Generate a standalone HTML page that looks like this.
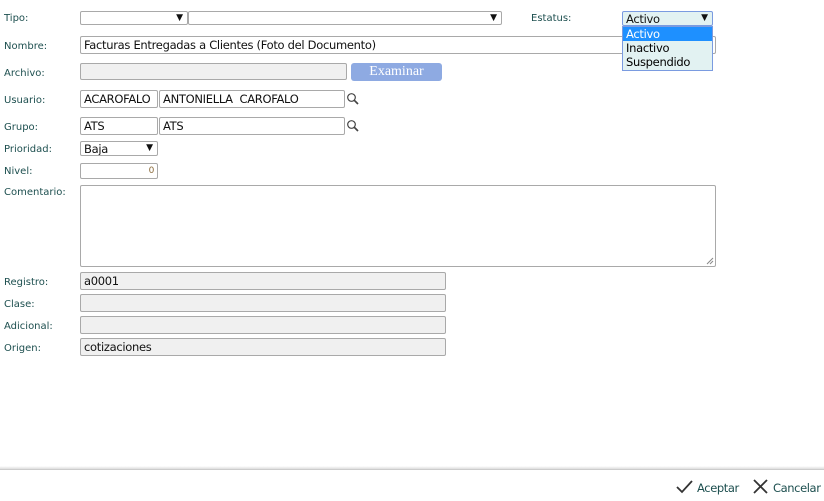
<!DOCTYPE html>
<html><head><meta charset="utf-8"><style>
*{box-sizing:border-box;margin:0;padding:0}
body{width:824px;height:501px;background:#fff;position:relative;overflow:hidden;font-family:"DejaVu Sans","Liberation Sans",sans-serif;}
.l{position:absolute;left:4px;font-size:10px;color:#1d4f4f;}
.i{position:absolute;border:1px solid #a9a9a9;border-radius:2px;background:#fff;font-size:11.5px;letter-spacing:-0.3px;color:#111;padding-left:3px;line-height:17px;white-space:nowrap;overflow:hidden}
.g{background:#f0f0f0}
.arr{position:absolute;right:4px;top:0;font-size:9px;letter-spacing:0}
svg{position:absolute}
</style></head><body>
<div class="l" style="top:13px">Tipo:</div>
<div class="i" style="left:80px;top:11px;width:108px;height:14px"><span class="arr" style="line-height:13px">▼</span></div>
<div class="i" style="left:188px;top:11px;width:314px;height:14px"><span class="arr" style="line-height:13px">▼</span></div>
<div class="l" style="left:531px;top:13px">Estatus:</div>
<div class="i" style="left:622px;top:11px;width:91px;height:15px;background:#e2f2f2;border-color:#7a9be0;line-height:14px">Activo<span class="arr" style="line-height:13px">▼</span></div>
<div style="position:absolute;left:622px;top:26px;width:91px;height:45px;border:1px solid #7a9be0;background:#e2f2f2;font-size:11.5px;letter-spacing:-0.3px;line-height:14px;z-index:2">
<div style="background:#1e90ff;color:#fff;padding-left:3px">Activo</div>
<div style="padding-left:3px">Inactivo</div>
<div style="padding-left:3px">Suspendido</div></div>

<div class="l" style="top:41px">Nombre:</div>
<div class="i" style="left:80px;top:36px;width:636px;height:18px">Facturas Entregadas a Clientes (Foto del Documento)</div>
<div class="l" style="top:68px">Archivo:</div>
<div class="i g" style="left:80px;top:63px;width:267px;height:17px"></div>
<div style="position:absolute;left:351px;top:63px;width:91px;height:18px;background:#8eaae2;border-radius:3px;color:#fff;font-family:'Liberation Serif',serif;font-size:14px;text-align:center;line-height:17px">Examinar</div>

<div class="l" style="top:95px">Usuario:</div>
<div class="i" style="left:80px;top:90px;width:78px;height:18px">ACAROFALO</div>
<div class="i" style="left:159px;top:90px;width:186px;height:18px">ANTONIELLA&nbsp; CAROFALO</div>
<svg style="left:346px;top:92px" width="14" height="14" viewBox="0 0 14 14"><circle cx="5.5" cy="5.5" r="3.8" fill="none" stroke="#444" stroke-width="1.2"/><path d="M8.3 8.3L12 12" stroke="#444" stroke-width="1.7"/></svg>
<div class="l" style="top:122px">Grupo:</div>
<div class="i" style="left:80px;top:117px;width:78px;height:18px">ATS</div>
<div class="i" style="left:159px;top:117px;width:186px;height:18px">ATS</div>
<svg style="left:346px;top:119px" width="14" height="14" viewBox="0 0 14 14"><circle cx="5.5" cy="5.5" r="3.8" fill="none" stroke="#444" stroke-width="1.2"/><path d="M8.3 8.3L12 12" stroke="#444" stroke-width="1.7"/></svg>

<div class="l" style="top:144px">Prioridad:</div>
<div class="i" style="left:80px;top:141px;width:78px;height:15px;line-height:14px">Baja<span class="arr" style="line-height:13px">▼</span></div>
<div class="l" style="top:166px">Nivel:</div>
<div class="i" style="left:80px;top:163px;width:78px;height:16px;font-size:9px;text-align:right;padding-right:3px;line-height:14px;color:#8a6a3a">0</div>
<div class="l" style="top:187px">Comentario:</div>
<div class="i" style="left:80px;top:185px;width:636px;height:82px"></div>
<svg style="left:706px;top:257px" width="8" height="8"><path d="M7 1L1 7M7 4L4 7" stroke="#888"/></svg>

<div class="l" style="top:277px">Registro:</div>
<div class="i g" style="left:80px;top:272px;width:366px;height:18px">a0001</div>
<div class="l" style="top:299px">Clase:</div>
<div class="i g" style="left:80px;top:294px;width:366px;height:18px"></div>
<div class="l" style="top:321px">Adicional:</div>
<div class="i g" style="left:80px;top:316px;width:366px;height:18px"></div>
<div class="l" style="top:343px">Origen:</div>
<div class="i g" style="left:80px;top:338px;width:366px;height:18px">cotizaciones</div>

<div style="position:absolute;left:0;top:466px;width:824px;height:4px;background:linear-gradient(#fff,#ddd);border-bottom:1px solid #ccc"></div>
<svg style="left:676px;top:479px" width="17" height="15" viewBox="0 0 17 15"><path d="M1 8L6 13L16 2" fill="none" stroke="#333" stroke-width="1.8"/></svg>
<div style="position:absolute;left:697px;top:481px;font-size:11.5px;letter-spacing:-0.4px;color:#1d4f4f">Aceptar</div>
<svg style="left:753px;top:479px" width="15" height="15" viewBox="0 0 15 15"><path d="M1 1L14 14M14 1L1 14" stroke="#333" stroke-width="1.8"/></svg>
<div style="position:absolute;left:773px;top:481px;font-size:11.5px;letter-spacing:-0.4px;color:#1d4f4f">Cancelar</div>
</body></html>
